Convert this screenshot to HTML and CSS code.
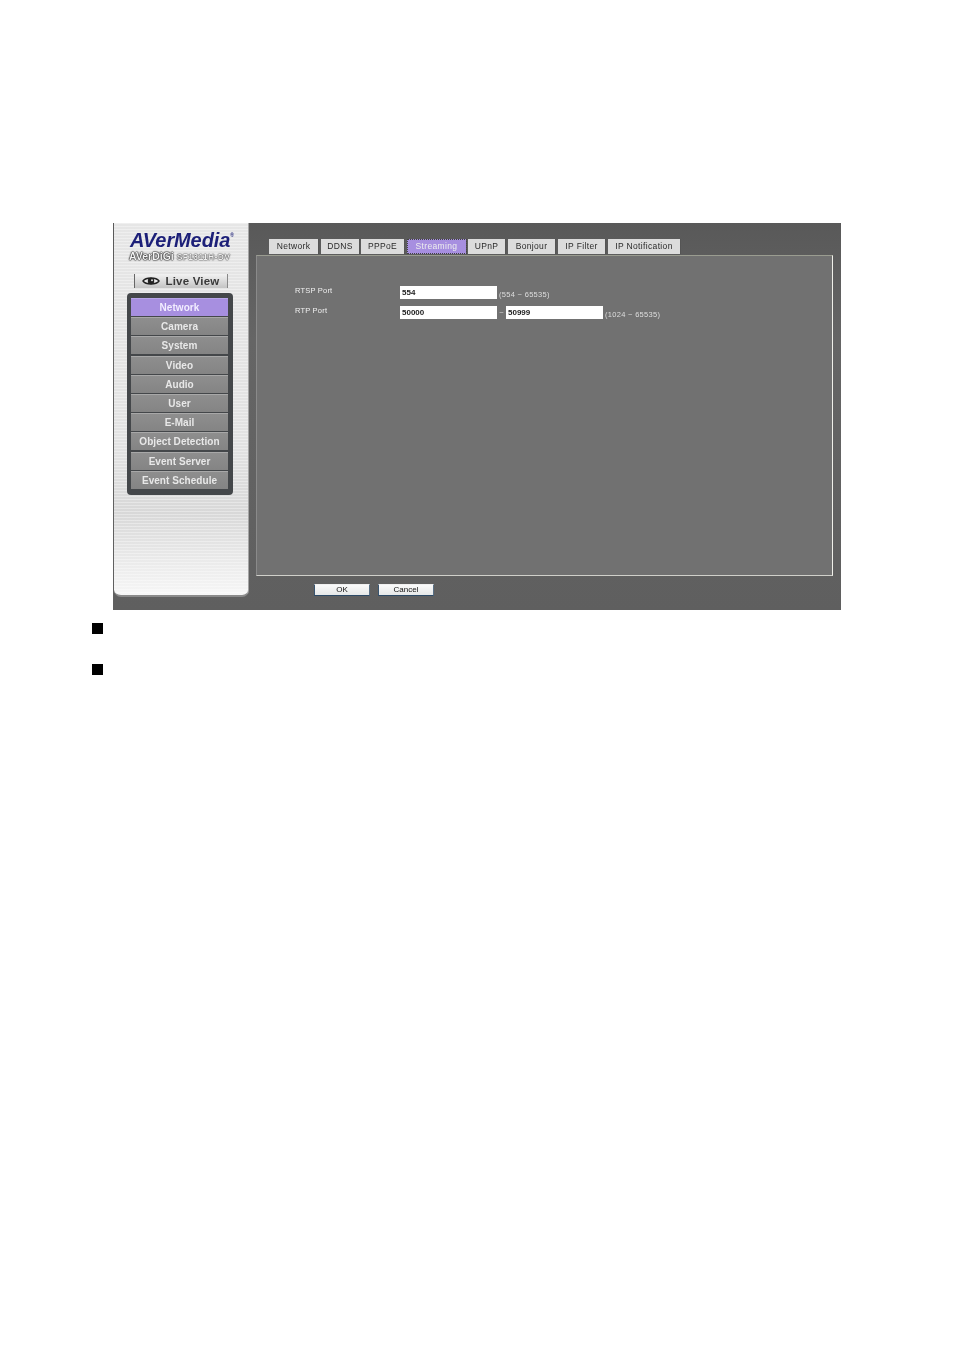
FILE: index.html
```html
<!DOCTYPE html>
<html lang="en">
<head>
<meta charset="utf-8">
<title>AVerMedia Streaming</title>
<link rel="stylesheet" href="styles.css">
</head>
<body>
<div class="window">
  <aside class="sidebar">
    <div class="logo">AVerMedia<sup class="reg">®</sup></div>
    <div class="model"><b>AVerDiGi</b> <span>SF1311H-DV</span></div>
    <div class="live">
      <svg class="eye" width="18" height="10" viewBox="0 0 18 10">
        <path d="M1 5C4 1 14 1 17 5C14 9 4 9 1 5Z" fill="#e8e8e8" stroke="#222" stroke-width="1.4"/>
        <circle cx="9" cy="5" r="3.2" fill="#222"/>
        <circle cx="10" cy="4.2" r="1" fill="#ddd"/>
      </svg>
      <span>Live View</span>
    </div>
    <nav class="menu">
      <a class="item active">Network</a>
      <a class="item">Camera</a>
      <a class="item">System</a>
      <a class="item">Video</a>
      <a class="item">Audio</a>
      <a class="item">User</a>
      <a class="item">E-Mail</a>
      <a class="item">Object Detection</a>
      <a class="item">Event Server</a>
      <a class="item">Event Schedule</a>
    </nav>
  </aside>
  <main class="main">
    <div class="tabs">
      <a class="tab w-network">Network</a>
      <a class="tab w-ddns">DDNS</a>
      <a class="tab w-pppoe">PPPoE</a>
      <a class="tab w-streaming on">Streaming</a>
      <a class="tab w-upnp">UPnP</a>
      <a class="tab w-bonjour">Bonjour</a>
      <a class="tab w-filter">IP Filter</a>
      <a class="tab w-notify">IP Notification</a>
    </div>
    <section class="panel">
      <div class="row">
        <label class="lbl">RTSP Port</label>
        <div class="field">554</div>
        <span class="hint">(554 ~ 65535)</span>
      </div>
      <div class="row">
        <label class="lbl">RTP Port</label>
        <div class="field">50000</div>
        <span class="tilde">~</span>
        <div class="field">50999</div>
        <span class="hint">(1024 ~ 65535)</span>
      </div>
    </section>
    <div class="actions">
      <button class="btn">OK</button>
      <button class="btn">Cancel</button>
    </div>
  </main>
</div>
<ul class="bullets">
  <li class="bullet"></li>
  <li class="bullet"></li>
</ul>
</body>
</html>
```
FILE: styles.css
```css
* { box-sizing: border-box; }
html, body { margin: 0; padding: 0; background: #fff; }
body { height: 1350px; padding: 223px 0 0 113px; font-family: "Liberation Sans", Arial, sans-serif; overflow: hidden; }

.window { display: flex; width: 728px; height: 387px; background: linear-gradient(#595959, #656565 30%, #5f5f5f); filter: blur(.3px); }

.sidebar {
  width: 135px; height: 374px; margin-left: 1px; flex: none;
  display: flex; flex-direction: column; align-items: flex-start;
  border-radius: 0 0 7px 7px;
  border-bottom: 2px solid #8a8a8a;
  border-right: 1px solid #a5a5a5;
  background:
    repeating-linear-gradient(rgba(255,255,255,.35) 0 1px, rgba(255,255,255,0) 1px 3px),
    linear-gradient(#e6e6e6, #e2e2e2 60%, #d8d8d8 78%, #ececec 92%, #f6f6f6);
}
.logo { margin: 8px 0 0 16px; height: 19px; font-size: 20px; line-height: 19px; font-weight: 700; font-style: italic; color: #1c1f78; letter-spacing: -.1px; white-space: nowrap; }
.reg { font-size: 5px; vertical-align: top; line-height: 8px; font-style: normal; }
.model { margin: 1px 0 0 15px; height: 11px; font-size: 10.5px; line-height: 11px; color: #fff; white-space: nowrap; font-weight: 700; }
.model b { color: #f4f4f4; text-shadow: 0 0 1.5px #111, 0 0 1.5px #111, 0 0 1px #000; letter-spacing: 0; }
.model span { font-size: 8.5px; font-weight: 700; color: #eee; text-shadow: 0 0 1.5px #222, 0 0 1px #111; letter-spacing: .35px; }
.live {
  margin: 12px 0 0 20px; width: 94px; height: 14px;
  display: flex; align-items: center; justify-content: center; gap: 5px;
  border-left: 1px solid #666; border-right: 1px solid #888;
  background: linear-gradient(#f2f2f2, #c4c4c4);
  font-size: 11.5px; font-weight: 700; color: #3a3a3a; letter-spacing: .2px;
}
.menu {
  margin: 5px 0 0 13px; width: 106px; height: 202px;
  padding: 5px 5px 0 4px;
  display: flex; flex-direction: column; gap: 1.2px;
  background: #44474a; border-radius: 4px;
}
.item {
  height: 18px; flex: none; text-align: center;
  font-size: 10px; line-height: 18px; font-weight: 700; color: #e8e8e8; letter-spacing: .05px;
  background: linear-gradient(#8e8e8e, #848484);
  border-top: 1px solid #a8a8a8;
}
.item.active { background: #a78fe0; color: #f2edff; border-top-color: #b7a5e8; }

.main { flex: 1; display: flex; flex-direction: column; padding: 16px 0 0 7px; }
.tabs { display: flex; gap: 2px; padding-left: 13px; height: 16px; }
.tab {
  height: 15px; flex: none; text-align: center;
  font-size: 8.5px; line-height: 15px; color: #2a2a2a; letter-spacing: .35px;
  background: #dcdcdc; border-right: 1px solid #555;
}
.w-network { width: 50px; }
.w-ddns { width: 39px; }
.w-pppoe { width: 44px; margin-left: -1px; }
.w-streaming { width: 60px; }
.w-upnp { width: 38px; margin-left: -1px; }
.w-bonjour { width: 48px; }
.w-filter { width: 48px; }
.w-notify { width: 73px; }
.tab.on { background: #a78fe0; color: #eee; outline: 1px dotted #444; outline-offset: -1px; }

.panel {
  width: 577px; height: 321px;
  display: flex; flex-direction: column; gap: 7px;
  padding: 30px 0 0 38px;
  background: #717171;
  border-top: 1px solid #9a9c90;
  border-left: 1px solid #8a8a8a;
  border-right: 1px solid #f0f0ea;
  border-bottom: 1px solid #d0d0ca;
}
.row { display: flex; align-items: center; height: 13px; }
.lbl { width: 105px; font-size: 7.5px; color: #f0f0f0; letter-spacing: .2px; margin-top: -5px; }
.field {
  width: 97px; height: 13px; background: #fff; padding-left: 2px;
  font-size: 8px; line-height: 13px; color: #222; font-weight: 700;
}
.tilde { width: 9px; text-align: center; font-size: 7.5px; color: #ddd; }
.hint { margin-left: 2px; font-size: 7.5px; color: #dedede; letter-spacing: .3px; margin-top: 3px; }

.actions { display: flex; gap: 8px; padding: 8px 0 0 58px; }
.btn {
  width: 56px; height: 12px; padding: 0; margin: 0;
  font: 8px/10px "Liberation Sans", Arial, sans-serif; color: #111;
  background: linear-gradient(#fafafa, #e6e8e8);
  border: 1px solid #f0f0f0; border-bottom: 1px solid #2d4a66; border-left: 1px solid #3a5570; border-right: 1px solid #5a7085;
}

.bullets { list-style: none; margin: 13px 0 0 -21px; padding: 0; display: flex; flex-direction: column; gap: 30px; }
.bullet { width: 11px; height: 11px; background: #000; }
```
